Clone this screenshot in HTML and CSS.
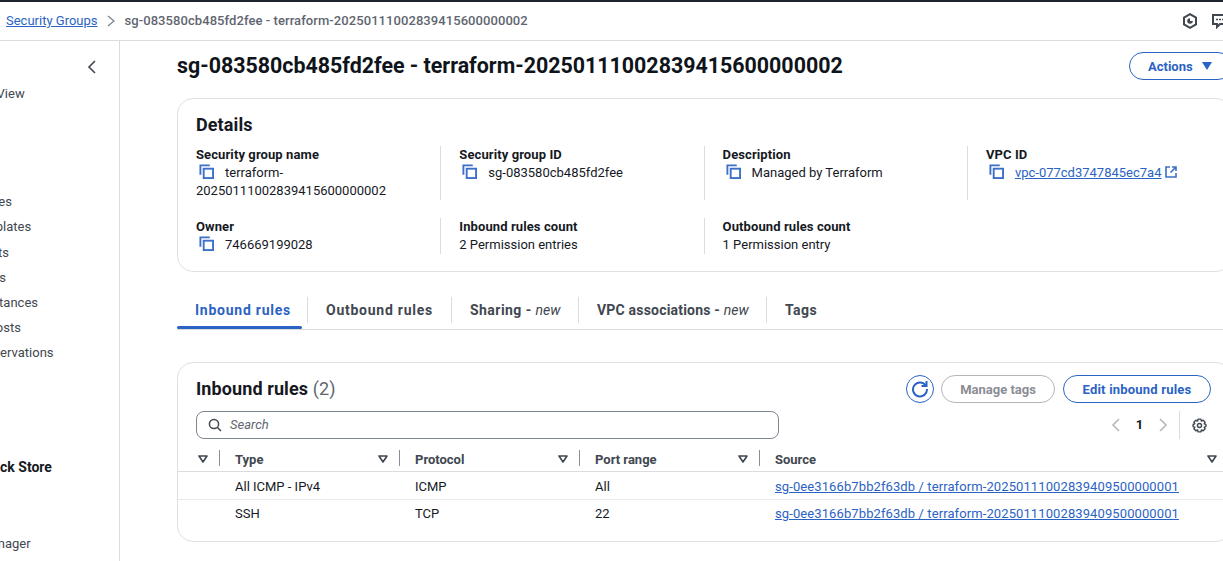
FILE: index.html
```html
<!DOCTYPE html>
<html lang="en">
<head>
    <meta charset="UTF-8">
    <meta name="viewport" content="width=device-width, initial-scale=1.0">
    <title>Security Groups</title>
    <link rel="stylesheet" href="styles.css">
</head>
<body>
    <svg class="defs" width="0" height="0">
        <symbol id="copy" viewBox="0 0 16 16">
            <path d="M1.5 11.5V1.5H11.5" fill="none" stroke="currentColor" stroke-width="2"/>
            <rect x="5" y="5" width="10" height="10" fill="none" stroke="currentColor" stroke-width="2"/>
        </symbol>
        <symbol id="caret" viewBox="0 0 10 8">
            <path d="M1 1H9L5 7Z" fill="none" stroke="currentColor" stroke-width="1.6" stroke-linejoin="round"/>
        </symbol>
    </svg>

    <div class="topstrip"></div>
    <header class="crumbs">
        <a href="#" class="crumb-link">Security Groups</a>
        <svg class="crumb-sep" width="8" height="12" viewBox="0 0 8 12"><path d="M1 1L7 6L1 11" fill="none" stroke="currentColor" stroke-width="1.3"/></svg>
        <span class="crumb-current">sg-083580cb485fd2fee - terraform-20250111002839415600000002</span>
        <div class="top-icons">
            <svg width="16" height="16" viewBox="0 0 16 16"><path d="M8 1.2L14 4.6V11.4L8 14.8L2 11.4V4.6Z" fill="none" stroke="currentColor" stroke-width="2"/><path d="M8 5.2A2.8 2.8 0 1 0 10.8 8H8Z" fill="currentColor"/></svg>
            <svg width="16" height="16" viewBox="0 0 16 16"><path d="M1 2H15V11H8L5 14V11H1Z" fill="none" stroke="currentColor" stroke-width="2"/><path d="M4 6.5H6M7 6.5H9M10 6.5H12" stroke="currentColor" stroke-width="1.6"/></svg>
        </div>
    </header>

    <div class="layout">
        <nav class="sidebar">
            <div class="side-toggle">
                <svg width="9" height="14" viewBox="0 0 9 14"><path d="M8 1L2 7L8 13" fill="none" stroke="currentColor" stroke-width="1.6"/></svg>
            </div>
            <ul class="side-list side-top">
                <li>EC2 Global View</li>
            </ul>
            <ul class="side-list side-instances">
                <li>Instance Types</li>
                <li>Launch Templates</li>
                <li>Spot Requests</li>
                <li>Savings Plans</li>
                <li>Reserved Instances</li>
                <li>Dedicated Hosts</li>
                <li>Capacity Reservations</li>
            </ul>
            <ul class="side-list side-block">
                <li class="side-head">Elastic Block Store</li>
                <li class="side-last">Lifecycle Manager</li>
            </ul>
        </nav>

        <main class="content">
            <div class="page-head">
                <h1>sg-083580cb485fd2fee - terraform-20250111002839415600000002</h1>
                <button class="btn btn-actions">Actions <span class="solid-caret"></span></button>
            </div>

            <section class="card details">
                <h2>Details</h2>
                <div class="detail-grid">
                    <div class="detail">
                        <div class="label">Security group name</div>
                        <div class="value"><svg class="copy"><use href="#copy"/></svg>terraform-20250111002839415600000002</div>
                    </div>
                    <div class="detail">
                        <div class="label">Security group ID</div>
                        <div class="value"><svg class="copy"><use href="#copy"/></svg>sg-083580cb485fd2fee</div>
                    </div>
                    <div class="detail">
                        <div class="label">Description</div>
                        <div class="value"><svg class="copy"><use href="#copy"/></svg>Managed by Terraform</div>
                    </div>
                    <div class="detail">
                        <div class="label">VPC ID</div>
                        <div class="value"><svg class="copy"><use href="#copy"/></svg><a href="#">vpc-077cd3747845ec7a4</a>
                            <svg class="ext" width="12" height="12" viewBox="0 0 12 12"><path d="M5 1H1V11H11V7M7 1H11V5M11 1L5.5 6.5" fill="none" stroke="currentColor" stroke-width="1.6"/></svg>
                        </div>
                    </div>
                    <div class="detail">
                        <div class="label">Owner</div>
                        <div class="value"><svg class="copy"><use href="#copy"/></svg>746669199028</div>
                    </div>
                    <div class="detail">
                        <div class="label">Inbound rules count</div>
                        <div class="value">2 Permission entries</div>
                    </div>
                    <div class="detail">
                        <div class="label">Outbound rules count</div>
                        <div class="value">1 Permission entry</div>
                    </div>
                </div>
            </section>

            <div class="tabs">
                <a class="tab tab-wide active">Inbound rules</a>
                <a class="tab tab-wide">Outbound rules</a>
                <a class="tab">Sharing - <em>new</em></a>
                <a class="tab tab-vpc">VPC associations - <em>new</em></a>
                <a class="tab">Tags</a>
            </div>

            <section class="card rules">
                <div class="rules-head">
                    <h2>Inbound rules <span class="count">(2)</span></h2>
                    <div class="rules-actions">
                        <button class="btn btn-icon">
                            <svg width="18" height="18" viewBox="0 0 18 18"><path d="M14.6 5.2A7 7 0 1 0 16 9" fill="none" stroke="currentColor" stroke-width="2"/><path d="M15.5 1V6H10.5" fill="none" stroke="currentColor" stroke-width="2"/></svg>
                        </button>
                        <button class="btn btn-off">Manage tags</button>
                        <button class="btn btn-edit">Edit inbound rules</button>
                    </div>
                </div>

                <div class="search-row">
                    <div class="search">
                        <svg width="14" height="14" viewBox="0 0 14 14"><circle cx="6" cy="6" r="4.6" fill="none" stroke="currentColor" stroke-width="1.5"/><path d="M9.5 9.5L13 13" stroke="currentColor" stroke-width="1.5"/></svg>
                        <span>Search</span>
                    </div>
                    <div class="pager">
                        <svg class="pager-arrow" width="9" height="14" viewBox="0 0 9 14"><path d="M8 1L2 7L8 13" fill="none" stroke="currentColor" stroke-width="1.5"/></svg>
                        <span class="page-no">1</span>
                        <svg class="pager-arrow" width="9" height="14" viewBox="0 0 9 14"><path d="M1 1L7 7L1 13" fill="none" stroke="currentColor" stroke-width="1.5"/></svg>
                        <span class="pager-sep"></span>
                        <svg class="gear" width="15" height="15" viewBox="0 0 16 16"><path d="M6.5 1.2H9.5L10 3.2L11.9 2.4L14 4.5L13 6.2L14.8 6.8V9.2L13 9.8L14 11.5L11.9 13.6L10 12.8L9.5 14.8H6.5L6 12.8L4.1 13.6L2 11.5L3 9.8L1.2 9.2V6.8L3 6.2L2 4.5L4.1 2.4L6 3.2Z" fill="none" stroke="currentColor" stroke-width="1.5" stroke-linejoin="round"/><circle cx="8" cy="8" r="2.2" fill="none" stroke="currentColor" stroke-width="1.5"/></svg>
                    </div>
                </div>

                <div class="row row-head">
                    <div class="cell cell-check"><svg class="caret"><use href="#caret"/></svg><i></i></div>
                    <div class="cell">Type<svg class="caret"><use href="#caret"/></svg><i></i></div>
                    <div class="cell">Protocol<svg class="caret"><use href="#caret"/></svg><i></i></div>
                    <div class="cell">Port range<svg class="caret"><use href="#caret"/></svg><i></i></div>
                    <div class="cell cell-source">Source<svg class="caret"><use href="#caret"/></svg></div>
                </div>
                <div class="row row-first">
                    <div class="cell cell-check"></div>
                    <div class="cell">All ICMP - IPv4</div>
                    <div class="cell">ICMP</div>
                    <div class="cell">All</div>
                    <div class="cell"><a href="#">sg-0ee3166b7bb2f63db / terraform-20250111002839409500000001</a></div>
                </div>
                <div class="row row-last">
                    <div class="cell cell-check"></div>
                    <div class="cell">SSH</div>
                    <div class="cell">TCP</div>
                    <div class="cell">22</div>
                    <div class="cell"><a href="#">sg-0ee3166b7bb2f63db / terraform-20250111002839409500000001</a></div>
                </div>
            </section>
        </main>
    </div>
</body>
</html>
```

FILE: styles.css
```css
html, body {
    height: 561px;
    overflow: hidden;
}
body {
    margin: 0;
    font-family: Roboto, Arial, sans-serif;
    font-size: 13px;
    line-height: 18px;
    color: #16191f;
    background: #fff;
}
a {
    color: #2b63c4;
}
ul {
    list-style: none;
    margin: 0;
    padding: 0;
}
.defs {
    position: absolute;
}
.topstrip {
    height: 2px;
    background: #1b232d;
}
.crumbs {
    display: flex;
    align-items: center;
    height: 38px;
    padding-left: 6px;
    border-bottom: 1px solid #dcdcde;
}
.crumb-sep {
    margin: 0 10px 0 9px;
    color: #7d8590;
}
.crumb-current {
    color: #5f6670;
    font-weight: 500;
    letter-spacing: 0.07px;
}
.top-icons {
    display: flex;
    gap: 14px;
    margin-left: auto;
    margin-right: -5px;
    color: #414750;
}
.layout {
    display: flex;
}
.sidebar {
    flex: none;
    width: 119px;
    height: 520px;
    border-right: 1px solid #dcdcde;
    overflow: hidden;
    color: #414750;
}
.side-toggle {
    display: flex;
    justify-content: flex-end;
    padding: 19px 23px 0 0;
    height: 20px;
}
.side-list {
    margin-left: -75px;
    white-space: nowrap;
}
.side-list li {
    height: 25.2px;
    line-height: 25.2px;
}
.side-top {
    margin-top: 1px;
    margin-left: -70px;
}
.side-instances {
    margin-top: 83px;
}
.side-block {
    margin-top: 89px;
}
.side-head {
    font-size: 14px;
    font-weight: 700;
    margin-left: 9px;
    color: #16191f;
}
.side-last {
    margin-top: 51px;
}
.content {
    flex: none;
    width: 1055px;
    margin-left: 57px;
}
.page-head {
    display: flex;
    align-items: center;
    justify-content: space-between;
    height: 50px;
    margin-bottom: 7px;
}
h1 {
    margin: 0;
    font-size: 21.4px;
    line-height: 28px;
    font-weight: 700;
    color: #0f141a;
}
h2 {
    margin: 0;
    font-size: 18px;
    line-height: 24px;
    font-weight: 700;
    letter-spacing: 0.1px;
}
.btn {
    font-family: inherit;
    font-size: 13px;
    font-weight: 700;
    height: 28px;
    border-radius: 14px;
    border: 1.5px solid #2b63c4;
    background: #fff;
    color: #2b63c4;
    padding: 0;
}
.btn-actions {
    display: flex;
    align-items: center;
    width: 103px;
    padding-left: 18px;
    gap: 9px;
}
.solid-caret {
    width: 0;
    height: 0;
    border-left: 5px solid transparent;
    border-right: 5px solid transparent;
    border-top: 8px solid #2b63c4;
}
.card {
    border: 1px solid #e1e1e3;
    border-radius: 16px;
    box-sizing: border-box;
}
.details {
    height: 174px;
    padding: 14px 0 0 18px;
}
.detail-grid {
    display: grid;
    grid-template-columns: repeat(4, 263.3px);
    grid-template-rows: 54px 36px;
    row-gap: 18px;
    margin-top: 9px;
}
.detail:not(:nth-child(4n+1)) {
    border-left: 1px solid #dcdcde;
    margin-left: -19px;
    padding-left: 18px;
}
.label {
    font-weight: 700;
    letter-spacing: 0.1px;
}
.value {
    padding-right: 30px;
}
.copy {
    width: 15px;
    height: 15px;
    color: #3c6fc9;
    margin: 0 11px 0 3px;
    vertical-align: -2px;
}
.ext {
    color: #3c6fc9;
    vertical-align: -1px;
}
.tabs {
    display: grid;
    grid-template-columns: 131px 144px 127px 188px auto;
    height: 32px;
    margin-top: 25px;
    border-bottom: 1px solid #dcdcde;
}
.tab {
    position: relative;
    display: block;
    height: 26px;
    line-height: 26px;
    padding-left: 18px;
    font-size: 14px;
    font-weight: 700;
    letter-spacing: 0.45px;
    white-space: nowrap;
    color: #414750;
    border-right: 1px solid #dcdcde;
}
.tab-wide {
    letter-spacing: 0.75px;
}
.tab-vpc {
    letter-spacing: 0.2px;
}
.tab:last-child {
    border-right: 0;
}
.tab em {
    font-weight: 400;
    letter-spacing: 0;
}
.tab.active {
    color: #2b63c4;
}
.tab.active::after {
    content: "";
    position: absolute;
    left: 0;
    right: 5px;
    top: 29px;
    height: 3px;
    border-radius: 2px;
    background: #2b63c4;
}
.rules {
    height: 180px;
    margin-top: 32px;
}
.rules-head {
    display: flex;
    align-items: center;
    justify-content: space-between;
    padding: 12px 20px 0 18px;
    height: 28px;
}
.count {
    font-weight: 400;
    color: #5f6670;
}
.rules-actions {
    display: flex;
    gap: 7px;
}
.btn-icon {
    display: flex;
    align-items: center;
    justify-content: center;
    width: 28px;
    color: #2b63c4;
}
.btn-off {
    width: 114px;
    margin-right: 1px;
    border-color: #b4b4bb;
    color: #8c8c94;
}
.btn-edit {
    width: 148px;
    letter-spacing: 0.2px;
}
.search-row {
    display: flex;
    align-items: center;
    justify-content: space-between;
    padding: 8px 0 0 18px;
}
.search {
    display: flex;
    align-items: center;
    gap: 8px;
    box-sizing: border-box;
    width: 583px;
    height: 28px;
    padding-left: 11px;
    border: 1px solid #7d8590;
    border-radius: 8px;
    color: #414750;
}
.search span {
    font-style: italic;
    color: #5f6670;
}
.pager {
    display: flex;
    align-items: center;
    height: 28px;
    margin-right: 24px;
    color: #b4b4bb;
}
.page-no {
    width: 39px;
    text-align: center;
    font-weight: 700;
    color: #16191f;
}
.pager-sep {
    width: 1px;
    height: 28px;
    margin: 0 12px 0 11px;
    background: #dcdcde;
}
.gear {
    color: #414750;
}
.row {
    display: grid;
    grid-template-columns: 43px 180px 180px 180px 1fr;
    height: 27px;
    align-items: center;
    border-bottom: 1px solid #eaeaec;
}
.row-head {
    height: 24px;
    margin-top: 8px;
    font-weight: 700;
    color: #414750;
    border-bottom-color: #dcdcde;
}
.row-last {
    border-bottom: 0;
}
.cell {
    position: relative;
    height: 18px;
    padding-left: 14px;
    white-space: nowrap;
}
.row-head .cell, .row-first .cell {
    padding-top: 2px;
}
.cell a {
    letter-spacing: 0.1px;
}
.cell-check {
    padding-left: 0;
}
.caret {
    position: absolute;
    right: 13px;
    top: 6px;
    width: 10px;
    height: 8px;
    color: #414750;
}
.cell-source .caret {
    right: 14px;
}
.cell i {
    position: absolute;
    right: 1px;
    top: 1px;
    width: 1px;
    height: 16px;
    background: #8c8c94;
}
```
